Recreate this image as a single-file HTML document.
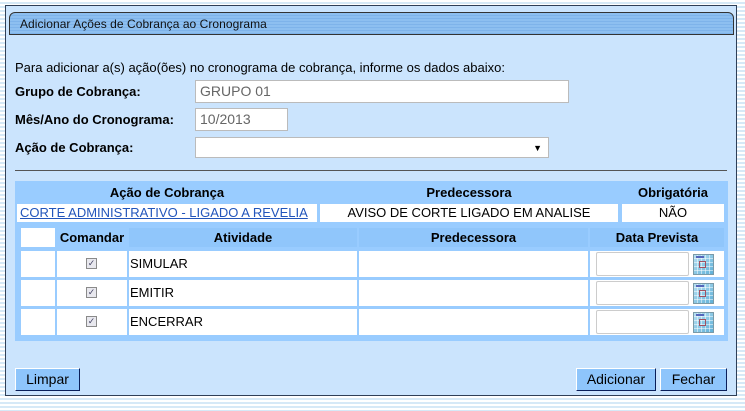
<!DOCTYPE html>
<html><head><meta charset="utf-8"><style>
*{box-sizing:border-box;margin:0;padding:0}
body{width:745px;height:411px;overflow:hidden;font-family:"Liberation Sans",Arial,sans-serif;font-size:13px;color:#000;
background:repeating-linear-gradient(180deg,#ffffff 0,#ffffff 2px,#d6e9f7 2px,#d6e9f7 4px);position:relative}
.a{position:absolute}
#panel{left:5px;top:5px;width:732px;height:391px;background:#cbe4fd;border:1px solid #2f3f57}
#title{left:9px;top:12px;width:725px;height:23px;border:1px solid #333;border-radius:6px 6px 0 0;
background:repeating-linear-gradient(180deg,#8dbff0 0,#8dbff0 2px,#7eb3ea 2px,#7eb3ea 3px);font-size:12px;letter-spacing:0.05px;padding:4px 0 0 10px;color:#111}
.lbl{font-weight:bold;font-size:13px}
.inp{background:#fff;border:1px solid #bbb;font-size:14px;color:#666;padding:2px 4px}
#tbl{left:15px;top:181px;width:713px;height:160px;background:#99ccff}
.w{background:#fff}
.h{font-weight:bold;font-size:13px;text-align:center}
.hc{background:#90c6fb}
.btn{background:#8ec5fb;border:1px solid;border-color:#fff #0a1f5a #0a1f5a #fff;font-size:14px;text-align:center;padding-top:2px;height:23px}
.cb{width:11px;height:11px;border:1px solid #8a8a8a;background:#e8e8ee;font-size:9px;line-height:9px;text-align:center;color:#446}
.cal{width:21px;height:21px;border:1px solid #7a9aa8;background:
linear-gradient(#5566bb,#5566bb) 2px 1px/8px 2px no-repeat,
repeating-linear-gradient(90deg,transparent 0,transparent 3px,rgba(255,255,255,.5) 3px,rgba(255,255,255,.5) 4px),
repeating-linear-gradient(180deg,transparent 0,transparent 3px,rgba(255,255,255,.5) 3px,rgba(255,255,255,.5) 4px),
linear-gradient(135deg,#b8e0f2,#5fb0d8)}
.cal:after{content:"";position:absolute;left:5px;top:6px;width:5px;height:5px;border:1px solid #a05060}
</style></head><body>
<div class="a" id="panel"></div>
<div class="a" id="title">Adicionar Ações de Cobrança ao Cronograma</div>
<div class="a" style="left:15px;top:60px">Para adicionar a(s) ação(ões) no cronograma de cobrança, informe os dados abaixo:</div>
<div class="a lbl" style="left:15px;top:84px">Grupo de Cobrança:</div>
<div class="a inp" style="left:195px;top:80px;width:374px;height:23px">GRUPO 01</div>
<div class="a lbl" style="left:15px;top:112px">Mês/Ano do Cronograma:</div>
<div class="a inp" style="left:195px;top:108px;width:93px;height:23px">10/2013</div>
<div class="a lbl" style="left:15px;top:140px">Ação de Cobrança:</div>
<div class="a inp" style="left:195px;top:137px;width:354px;height:21px"><span style="position:absolute;right:6px;top:5px;font-size:9px;color:#000">▼</span></div>
<div class="a" style="left:15px;top:170px;width:712px;height:1px;background:#555"></div>
<div class="a" id="tbl"></div>
<div class="a h" style="left:17px;top:185px;width:300px">Ação de Cobrança</div>
<div class="a h" style="left:320px;top:185px;width:298px">Predecessora</div>
<div class="a h" style="left:622px;top:185px;width:102px">Obrigatória</div>
<div class="a w" style="left:17px;top:204px;width:300px;height:18px;padding:1px 3px;font-size:13px"><span style="color:#2255bb;text-decoration:underline">CORTE ADMINISTRATIVO - LIGADO A REVELIA</span></div>
<div class="a w" style="left:320px;top:204px;width:298px;height:18px;padding-top:1px;text-align:center;font-size:13px">AVISO DE CORTE LIGADO EM ANALISE</div>
<div class="a w" style="left:622px;top:204px;width:102px;height:18px;padding-top:1px;text-align:center;font-size:13px">NÃO</div>
<div class="a w" style="left:21px;top:228px;width:34px;height:19px"></div>
<div class="a h" style="left:56px;top:230px;width:72px">Comandar</div>
<div class="a h hc" style="left:129px;top:228px;width:228px;height:19px;padding-top:2px">Atividade</div>
<div class="a h hc" style="left:359px;top:228px;width:229px;height:19px;padding-top:2px">Predecessora</div>
<div class="a h hc" style="left:590px;top:228px;width:134px;height:19px;padding-top:2px">Data Prevista</div>
<div class="a w" style="left:21px;top:251px;width:34px;height:26px"></div>
<div class="a w" style="left:57px;top:251px;width:70px;height:26px"><div class="cb a" style="left:29px;top:7px">✓</div></div>
<div class="a w" style="left:129px;top:251px;width:228px;height:26px;padding:5px 1px;font-size:13px">SIMULAR</div>
<div class="a w" style="left:359px;top:251px;width:229px;height:26px"></div>
<div class="a w" style="left:590px;top:251px;width:134px;height:26px"><div class="a" style="left:6px;top:1px;width:93px;height:24px;border:1px solid #ccc;border-radius:2px"></div><div class="a cal" style="left:103px;top:3px"></div></div>
<div class="a w" style="left:21px;top:280px;width:34px;height:26px"></div>
<div class="a w" style="left:57px;top:280px;width:70px;height:26px"><div class="cb a" style="left:29px;top:7px">✓</div></div>
<div class="a w" style="left:129px;top:280px;width:228px;height:26px;padding:5px 1px;font-size:13px">EMITIR</div>
<div class="a w" style="left:359px;top:280px;width:229px;height:26px"></div>
<div class="a w" style="left:590px;top:280px;width:134px;height:26px"><div class="a" style="left:6px;top:1px;width:93px;height:24px;border:1px solid #ccc;border-radius:2px"></div><div class="a cal" style="left:103px;top:3px"></div></div>
<div class="a w" style="left:21px;top:309px;width:34px;height:26px"></div>
<div class="a w" style="left:57px;top:309px;width:70px;height:26px"><div class="cb a" style="left:29px;top:7px">✓</div></div>
<div class="a w" style="left:129px;top:309px;width:228px;height:26px;padding:5px 1px;font-size:13px">ENCERRAR</div>
<div class="a w" style="left:359px;top:309px;width:229px;height:26px"></div>
<div class="a w" style="left:590px;top:309px;width:134px;height:26px"><div class="a" style="left:6px;top:1px;width:93px;height:24px;border:1px solid #ccc;border-radius:2px"></div><div class="a cal" style="left:103px;top:3px"></div></div>
<div class="a btn" style="left:15px;top:368px;width:65px">Limpar</div>
<div class="a btn" style="left:576px;top:368px;width:80px">Adicionar</div>
<div class="a btn" style="left:660px;top:368px;width:67px">Fechar</div>
</body></html>
